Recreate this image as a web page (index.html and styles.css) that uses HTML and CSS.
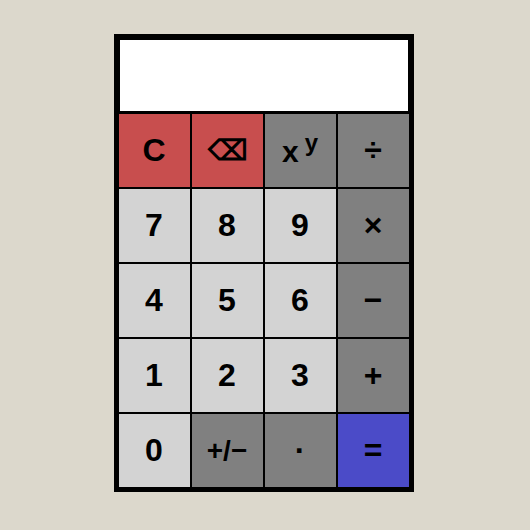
FILE: index.html
```html
<!DOCTYPE html>
<html lang="en">
<head>
    <meta charset="UTF-8">
    <title>Calculator</title>
    <link rel="stylesheet" href="styles.css">
</head>
<body>
    <div class="calculator">
        <div class="display"></div>
        <div class="keys">
            <button class="key red">C</button>
            <button class="key red small erase">⌫</button>
            <button class="key gray power">x<sup>y</sup></button>
            <button class="key gray">÷</button>
            <button class="key light">7</button>
            <button class="key light">8</button>
            <button class="key light">9</button>
            <button class="key gray">×</button>
            <button class="key light">4</button>
            <button class="key light">5</button>
            <button class="key light">6</button>
            <button class="key gray">−</button>
            <button class="key light">1</button>
            <button class="key light">2</button>
            <button class="key light">3</button>
            <button class="key gray">+</button>
            <button class="key light">0</button>
            <button class="key gray small">+/−</button>
            <button class="key gray">·</button>
            <button class="key blue">=</button>
        </div>
    </div>
</body>
</html>
```

FILE: styles.css
```css
body {
    margin: 0;
    padding: 34px 0 0 114px;
    background-color: #dcd8cc;
    font-family: "Liberation Sans", Arial, sans-serif;
}
.calculator {
    width: 290px;
    border: 5px solid #000;
    background: #000;
}
.display {
    height: 71px;
    margin: 1px;
    background: #fff;
}
.keys {
    display: grid;
    grid-template-columns: repeat(4, 71px);
    grid-auto-rows: 73px;
    gap: 2px;
    margin-top: 3px;
}
.key {
    border: 0;
    padding: 0 1px 0 0;
    color: #000;
    font-family: inherit;
    font-size: 32px;
    font-weight: bold;
}
.key.small {
    font-size: 28px;
}
.key.erase {
    padding: 0;
}
.key.power {
    padding-top: 2px;
    font-size: 30px;
}
.key sup {
    margin-left: 6px;
    font-size: 24px;
    line-height: 0;
    vertical-align: 11px;
}
.red {
    background: #c84e4e;
}
.gray {
    background: #808080;
}
.light {
    background: #d3d3d3;
}
.blue {
    background: #4b4bc8;
}
```
